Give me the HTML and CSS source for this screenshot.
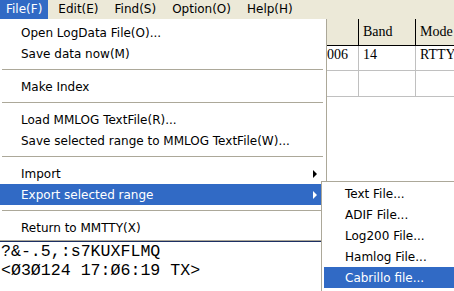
FILE: index.html
```html
<!DOCTYPE html>
<html>
<head>
<meta charset="utf-8">
<title>MMLOG</title>
<link rel="stylesheet" href="styles.css">
</head>
<body>
<div class="window">
  <div class="menubar">
    <span class="mb-item active">File(F)</span>
    <span class="mb-item">Edit(E)</span>
    <span class="mb-item">Find(S)</span>
    <span class="mb-item">Option(O)</span>
    <span class="mb-item">Help(H)</span>
  </div>
  <div class="content">
    <div class="grid">
      <div class="row head">
        <div class="cell"></div>
        <div class="cell c-date"></div>
        <div class="cell">Band</div>
        <div class="cell">Mode</div>
      </div>
      <div class="row r1">
        <div class="cell"></div>
        <div class="cell c-date">006</div>
        <div class="cell">14</div>
        <div class="cell">RTTY</div>
      </div>
      <div class="row r2">
        <div class="cell"></div>
        <div class="cell c-date"></div>
        <div class="cell"></div>
        <div class="cell"></div>
      </div>
    </div>
    <div class="console">
      <div class="line">?&amp;-.5,:s7KUXFLMQ</div>
      <div class="line">&lt;Ø3Ø124 17:Ø6:19 TX&gt;</div>
    </div>
  </div>

  <div class="menu">
    <div class="mi">Open LogData File(O)...</div>
    <div class="mi">Save data now(M)</div>
    <div class="sep"></div>
    <div class="mi">Make Index</div>
    <div class="sep"></div>
    <div class="mi">Load MMLOG TextFile(R)...</div>
    <div class="mi">Save selected range to MMLOG TextFile(W)...</div>
    <div class="sep"></div>
    <div class="mi">Import<span class="arrow"></span></div>
    <div class="mi sel">Export selected range<span class="arrow"></span></div>
    <div class="sep"></div>
    <div class="mi">Return to MMTTY(X)</div>
  </div>

  <div class="submenu">
    <div class="mi">Text File...</div>
    <div class="mi">ADIF File...</div>
    <div class="mi">Log200 File...</div>
    <div class="mi">Hamlog File...</div>
    <div class="mi sel">Cabrillo file...</div>
  </div>
</div>
</body>
</html>
```
FILE: styles.css
```css
* { box-sizing: border-box; margin: 0; padding: 0; }
html, body { width: 454px; height: 291px; overflow: hidden; background: #fff; }
body { font-family: "DejaVu Sans", "Noto Sans", sans-serif; font-size: 12px; color: #000; }

.window { position: relative; width: 454px; height: 291px; display: flex; flex-direction: column; }

.menubar { height: 19px; flex: none; background: #ece9d8; display: flex; gap: 4px; }
.mb-item { padding: 0 6px; line-height: 19px; white-space: nowrap; }
.mb-item.active { background: #316ac5; color: #fff; }

.content { flex: 1; display: flex; flex-direction: column; }

.grid { display: flex; flex-direction: column; font-family: "Liberation Serif", serif; font-size: 14px; }
.row { display: grid; grid-template-columns: 327px 32px 57px 1fr; border-bottom: 1px solid #c0c0c0; }
.row.head { height: 27px; background: #ece9d8; border-bottom: 1px solid #000; }
.row.r1 { height: 25px; }
.row.r2 { height: 26px; }
.cell { border-right: 1px solid #c0c0c0; padding: 1px 0 0 4px; white-space: nowrap; overflow: hidden; }
.cell.c-date { padding-left: 0; }
.cell:last-child { border-right: none; }
.head .cell { border-right: 1px solid #000; line-height: 26px; padding-top: 0; }
.head .cell:last-child { border-right: none; }

.console { margin-top: auto; height: 50px; border-top: 1px solid #1c2f63; font-family: "Liberation Mono", monospace; font-size: 16.6px; line-height: 19px; padding: 0 0 0 1px; }
.line { white-space: pre; }

.menu { position: absolute; left: 0; top: 19px; width: 327px; background: #fff; border-right: 1px solid #aca899; border-bottom: 1px solid #aca899; padding: 3px 0 2px; }
.mi { height: 21px; display: flex; align-items: center; padding-left: 21px; white-space: nowrap; }
.mi.sel { background: #316ac5; color: #fff; }
.arrow { margin-left: auto; margin-right: 9px; width: 0; height: 0; border-left: 4px solid currentColor; border-top: 4px solid transparent; border-bottom: 4px solid transparent; }
.sep { height: 1px; margin: 5px 3px 6px 2px; background: #aca899; }

.submenu { position: absolute; left: 321px; top: 181px; width: 140px; height: 120px; background: #fff; border-left: 1px solid #aca899; border-top: 1px solid #aca899; padding: 1px 0 0 2px; }
```
